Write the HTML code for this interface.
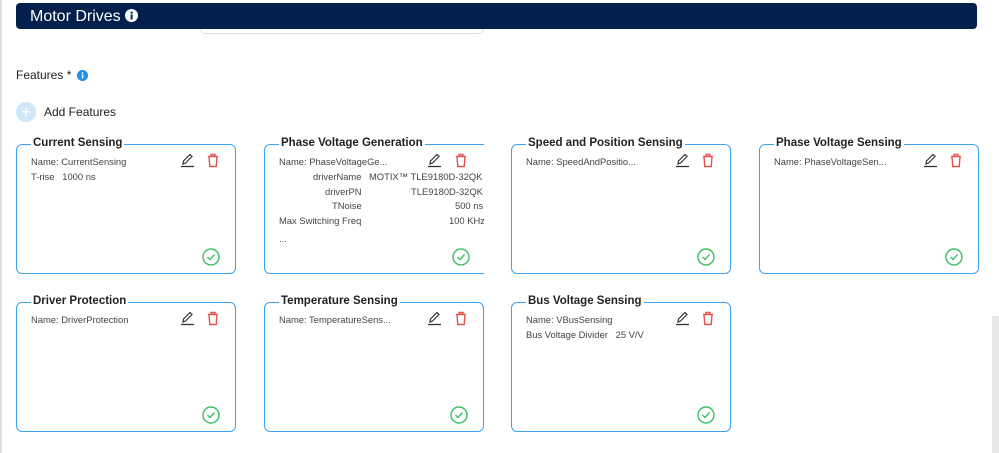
<!DOCTYPE html>
<html><head><style>
body{margin:0;width:999px;height:453px;background:#fff;font-family:"Liberation Sans",Arial,sans-serif;position:relative;overflow:hidden}
.lb{position:absolute;left:0;top:0;width:2px;height:453px;background:#e0e0e0}
.hdr{position:absolute;left:16px;top:3px;width:961px;height:26px;background:#03204c;border-radius:4px;color:#fff;font-size:16px;line-height:27px}
.hdr span{margin-left:14px}
.inp{position:absolute;left:200px;top:20px;width:282px;height:13px;border:1px solid #e2e2e2;border-top:none;border-radius:0 0 5px 5px}
.feat{position:absolute;left:16px;top:68px;font-size:12px;color:#222}
.add{position:absolute;left:16px;top:102px;font-size:12px;color:#222}
.plus{position:absolute;left:0;top:0;width:20px;height:20px;border-radius:50%;background:#cfe6fb;color:#fff;text-align:center;line-height:20px;font-size:18px}
.card{position:absolute;width:218px;height:128px;border:1.5px solid #3aa3f0;border-radius:6px}
.t{position:absolute;left:14px;top:-8px;background:#fff;padding:0 2px;font-size:11.5px;font-weight:bold;color:#222;white-space:nowrap}
.nm{position:absolute;left:14px;top:11px;font-size:9.4px;color:#444;white-space:nowrap}
.ln{position:absolute;left:14px;font-size:9.4px;color:#444;white-space:nowrap}
.ic{position:absolute;top:8px}
.ok{position:absolute;right:15px;bottom:7px}
.sb{position:absolute;left:992px;top:316px;width:7px;height:137px;background:#e8e8e8}
.clip{position:absolute;left:0;top:0;width:219px;height:130px;overflow:hidden}
</style></head><body>
<div class="lb"></div>
<div class="inp"></div>
<div class="hdr"><span>Motor Drives</span> <svg width="13" height="13" style="vertical-align:-1px"><circle cx="6.5" cy="6.5" r="6.5" fill="#fff"/><rect x="5.6" y="5.5" width="2" height="5" fill="#03204c"/><circle cx="6.6" cy="3.6" r="1.1" fill="#03204c"/></svg></div>
<div class="feat">Features * <svg width="11" height="11" style="vertical-align:-2px;margin-left:2px"><circle cx="5.5" cy="5.5" r="5.5" fill="#1e8fe8"/><rect x="4.8" y="4.5" width="1.5" height="4" fill="#fff"/><circle cx="5.5" cy="3" r="0.9" fill="#fff"/></svg></div>
<div class="add"><div class="plus">+</div><span style="position:absolute;left:28px;top:3px;white-space:nowrap">Add Features</span></div>

<svg width="0" height="0" style="position:absolute"><defs>
<g id="ed"><path d="M3 11 L3.5 8 L10 1.5 L12 3.5 L5.5 10 Z" fill="none" stroke="#333" stroke-width="1.2"/><line x1="1" y1="13.5" x2="14" y2="13.5" stroke="#333" stroke-width="1.3"/></g>
<g id="tr"><path d="M2 3.5 H12 M5 3.5 V1.5 H9 V3.5 M3 3.5 L3.8 13.5 H10.2 L11 3.5" fill="none" stroke="#e5534b" stroke-width="1.4"/></g>
<g id="ck"><circle cx="9" cy="9" r="8" fill="none" stroke="#3cbf63" stroke-width="1.4"/><path d="M5.5 9 L8 11.5 L12.5 6.5" fill="none" stroke="#3cbf63" stroke-width="1.4"/></g>
</defs></svg>

<div class="card" style="left:16px;top:144px"><div class="t">Current Sensing</div><div class="nm">Name: CurrentSensing</div><div class="ln" style="top:26px">T-rise &nbsp; 1000 ns</div>
<svg class="ic" style="left:163px" width="15" height="15"><use href="#ed"/></svg><svg class="ic" style="left:189px" width="14" height="15"><use href="#tr"/></svg><svg class="ok" width="18" height="18"><use href="#ck"/></svg></div>

<div class="card" style="left:264px;top:144px;border-right:none;width:219px;border-radius:6px 0 0 6px"><div class="t">Phase Voltage Generation</div><div class="nm">Name: PhaseVoltageGe...</div>
<div class="clip">
<div class="ln" style="top:26px;left:48px">driverName</div><div class="ln" style="top:26px;left:104px">MOTIX™ TLE9180D-32QK</div>
<div class="ln" style="top:41px;left:60px">driverPN</div><div class="ln" style="top:41px;left:146px">TLE9180D-32QK</div>
<div class="ln" style="top:55px;left:67px">TNoise</div><div class="ln" style="top:55px;left:190px">500 ns</div>
<div class="ln" style="top:70px">Max Switching Freq</div><div class="ln" style="top:70px;left:184px">100 KHz</div>
<div class="ln" style="top:88px">...</div>
</div>
<svg class="ic" style="left:162px" width="15" height="15"><use href="#ed"/></svg><svg class="ic" style="left:189px" width="14" height="15"><use href="#tr"/></svg><svg class="ok" style="right:14px" width="18" height="18"><use href="#ck"/></svg></div>

<div class="card" style="left:511px;top:144px"><div class="t">Speed and Position Sensing</div><div class="nm">Name: SpeedAndPositio...</div>
<svg class="ic" style="left:163px" width="15" height="15"><use href="#ed"/></svg><svg class="ic" style="left:189px" width="14" height="15"><use href="#tr"/></svg><svg class="ok" width="18" height="18"><use href="#ck"/></svg></div>

<div class="card" style="left:759px;top:144px"><div class="t">Phase Voltage Sensing</div><div class="nm">Name: PhaseVoltageSen...</div>
<svg class="ic" style="left:163px" width="15" height="15"><use href="#ed"/></svg><svg class="ic" style="left:189px" width="14" height="15"><use href="#tr"/></svg><svg class="ok" width="18" height="18"><use href="#ck"/></svg></div>

<div class="card" style="left:16px;top:302px"><div class="t">Driver Protection</div><div class="nm">Name: DriverProtection</div>
<svg class="ic" style="left:163px" width="15" height="15"><use href="#ed"/></svg><svg class="ic" style="left:189px" width="14" height="15"><use href="#tr"/></svg><svg class="ok" width="18" height="18"><use href="#ck"/></svg></div>

<div class="card" style="left:264px;top:302px"><div class="t">Temperature Sensing</div><div class="nm">Name: TemperatureSens...</div>
<svg class="ic" style="left:162px" width="15" height="15"><use href="#ed"/></svg><svg class="ic" style="left:189px" width="14" height="15"><use href="#tr"/></svg><svg class="ok" width="18" height="18"><use href="#ck"/></svg></div>

<div class="card" style="left:511px;top:302px"><div class="t">Bus Voltage Sensing</div><div class="nm">Name: VBusSensing</div><div class="ln" style="top:26px">Bus Voltage Divider &nbsp; 25 V/V</div>
<svg class="ic" style="left:163px" width="15" height="15"><use href="#ed"/></svg><svg class="ic" style="left:189px" width="14" height="15"><use href="#tr"/></svg><svg class="ok" width="18" height="18"><use href="#ck"/></svg></div>

<div class="sb"></div>
</body></html>
